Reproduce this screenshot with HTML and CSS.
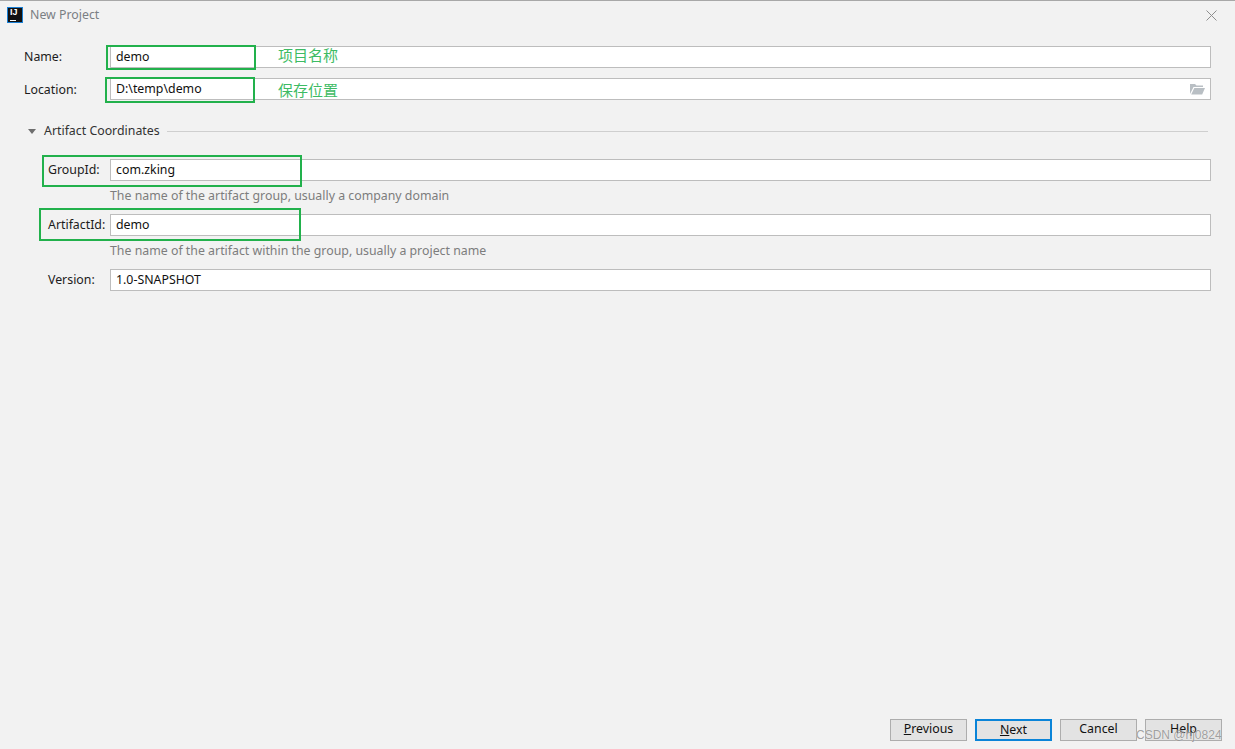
FILE: index.html
```html
<!DOCTYPE html>
<html lang="en">
<head>
<meta charset="utf-8">
<title>New Project</title>
<link rel="stylesheet" href="styles.css">
</head>
<body>
<div class="dialog">
  <header class="titlebar">
    <div class="logo"><span class="logo-text">IJ</span><span class="logo-bar"></span></div>
    <div class="title">New Project</div>
    <svg class="close" width="13" height="13" viewBox="0 0 13 13"><path d="M1.5 1.5l10 10M11.5 1.5l-10 10" stroke="#8e8e8e" stroke-width="1" fill="none"/></svg>
  </header>
  <main class="form">
    <div class="row row-top">
      <label class="label">Name:</label>
      <div class="input">demo</div>
    </div>
    <div class="row row-top row-location">
      <label class="label label-location">Location:</label>
      <div class="input">D:\temp\demo
        <svg class="folder" width="15" height="12" viewBox="0 0 15 12"><path d="M0 11V1h5l1.500 1.500H13V4H3.500L0 11z" fill="#b9bfc4"/><path d="M1.200 11.500L4.300 5H15l-2.800 6.500z" fill="#b9bfc4"/></svg>
      </div>
    </div>
    <div class="section">
      <span class="triangle"></span>
      <span class="section-title">Artifact Coordinates</span>
      <span class="section-line"></span>
    </div>
    <div class="row row-sub row-group">
      <label class="label">GroupId:</label>
      <div class="input">com.zking</div>
    </div>
    <div class="hint">The name of the artifact group, usually a company domain</div>
    <div class="row row-sub row-next">
      <label class="label">ArtifactId:</label>
      <div class="input">demo</div>
    </div>
    <div class="hint">The name of the artifact within the group, usually a project name</div>
    <div class="row row-sub row-next">
      <label class="label">Version:</label>
      <div class="input">1.0-SNAPSHOT</div>
    </div>
  </main>
  <footer class="footer">
    <button class="btn"><span class="mn">P</span>revious</button>
    <button class="btn btn-primary"><span class="mn">N</span>ext</button>
    <button class="btn">Cancel</button>
    <button class="btn">Help</button>
  </footer>

  <div class="mark mark-name"></div>
  <div class="mark mark-location"></div>
  <div class="mark mark-group"></div>
  <div class="mark mark-artifact"></div>
  <div class="note note-name">项目名称</div>
  <div class="note note-location">保存位置</div>
  <div class="watermark">CSDN @hj0824</div>
</div>
</body>
</html>
```
FILE: styles.css
```css
* { box-sizing: border-box; }
html, body { margin: 0; padding: 0; height: 100%; }
body {
  background: #f2f2f2;
  font-family: "Noto Sans", "Open Sans", "Noto Sans CJK SC", sans-serif;
  font-size: 12.35px;
  color: #1c1c1c;
  overflow: hidden;
}
.dialog {
  position: relative;
  width: 1235px;
  height: 749px;
  display: flex;
  flex-direction: column;
  border-top: 1px solid #a8a8a8;
}
.titlebar {
  height: 28px;
  display: flex;
  align-items: center;
  padding: 0 0 0 7px;
}
.logo {
  position: relative;
  width: 16px;
  height: 16px;
  background: #111;
  border: 1px solid #1a7fd4;
  margin-right: 7px;
  flex: none;
}
.logo-text {
  position: absolute;
  left: 2px;
  top: -1px;
  font: bold 9px/11px "Liberation Sans", sans-serif;
  color: #fff;
}
.logo-bar {
  position: absolute;
  left: 2px;
  bottom: 1px;
  width: 6px;
  height: 1px;
  background: #fff;
}
.title { color: #7b7f84; padding-bottom: 2px; }
.close { margin-left: auto; margin-right: 17px; }
.form {
  padding: 17px 24px 0 24px;
  display: flex;
  flex-direction: column;
}
.row { display: flex; align-items: center; height: 22px; }
.row-top .label { width: 86px; }
.row-location { margin-top: 10px; }
.row-sub { padding-left: 24px; }
.row-sub .label { width: 62px; }
.label { flex: none; padding-bottom: 2px; }
.row-top .label-location { padding-bottom: 0; }
.input {
  flex: 1;
  height: 22px;
  background: #fff;
  border: 1px solid #bdbdbd;
  padding: 0 5px 1px;
  line-height: 18px;
  color: #111;
  display: flex;
  align-items: center;
  justify-content: space-between;
}
.folder { margin: 1px 0 0; }
.section {
  display: flex;
  align-items: center;
  height: 20px;
  margin-top: 21px;
  margin-bottom: 18px;
  margin-right: 3px;
}
.triangle {
  width: 0;
  height: 0;
  border-left: 4.500px solid transparent;
  border-right: 4.500px solid transparent;
  border-top: 5px solid #6e6e6e;
  margin: 0 8px 0 4px;
}
.section-title { color: #333; padding-bottom: 2px; }
.section-line { flex: 1; height: 1px; background: #cfcfcf; margin-left: 7px; }
.hint {
  color: #7d7d7d;
  padding-left: 86px;
  height: 33px;
  line-height: 30px;
}
.footer {
  margin-top: auto;
  display: flex;
  justify-content: flex-end;
  gap: 8px;
  padding: 0 13px 8px 0;
}
.btn {
  width: 77px;
  height: 22px;
  padding: 0 0 2px;
  background: #e3e3e3;
  border: 1px solid #adadad;
  font: inherit;
  color: #111;
  line-height: 18px;
}
.btn-primary { border: 2px solid #0a84d8; }
.mn { text-decoration: underline; }
.mark { position: absolute; border: 2px solid #22b14c; }
.mark-name { left: 106px; top: 44px; width: 150px; height: 25px; }
.mark-location { left: 105px; top: 76px; width: 150px; height: 26px; }
.mark-group { left: 42px; top: 154px; width: 260px; height: 32px; }
.mark-artifact { left: 39px; top: 207px; width: 262px; height: 33px; }
.note {
  position: absolute;
  left: 278px;
  color: #3dbb64;
  font: 15px/20px "Noto Sans CJK SC", sans-serif;
}
.note-name { top: 44px; }
.note-location { top: 79px; }
.watermark {
  position: absolute;
  left: 1136px;
  top: 726px;
  font: 12px/16px "Liberation Sans", sans-serif;
  color: rgba(110, 110, 110, .65);
  text-shadow: 0 0 1px rgba(255, 255, 255, .8);
  white-space: nowrap;
}
```
